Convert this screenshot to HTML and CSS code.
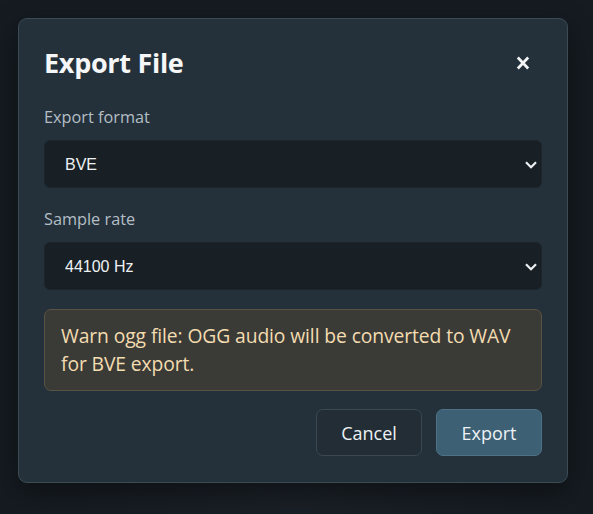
FILE: index.html
```html
<!DOCTYPE html>
<html lang="en">
<head>
<meta charset="utf-8">
<title>Export File</title>
<link rel="stylesheet" href="styles.css">
</head>
<body>
<div class="backdrop">
  <div class="modal" role="dialog" aria-labelledby="ttl">
    <div class="header">
      <h2 id="ttl" class="title">Export File</h2>
      <button class="close" aria-label="Close">
        <svg width="14" height="14" viewBox="0 0 14 14"><path d="M1.8 1.5 L12.2 12.5 M12.2 1.5 L1.8 12.5" stroke="#f2f4f5" stroke-width="2.7" stroke-linecap="butt"/></svg>
      </button>
    </div>
    <label class="label" for="fmt">Export format</label>
    <div class="select-wrap">
      <select id="fmt" class="select"><option>BVE</option></select>
      <svg class="chev" width="12" height="8" viewBox="0 0 12 8"><path d="M1 1.2 L6 6.2 L11 1.2" fill="none" stroke="#eef1f3" stroke-width="2.2"/></svg>
    </div>
    <label class="label second" for="rate">Sample rate</label>
    <div class="select-wrap">
      <select id="rate" class="select"><option>44100 Hz</option></select>
      <svg class="chev" width="12" height="8" viewBox="0 0 12 8"><path d="M1 1.2 L6 6.2 L11 1.2" fill="none" stroke="#eef1f3" stroke-width="2.2"/></svg>
    </div>
    <div class="warn">Warn ogg file: OGG audio will be converted to WAV for BVE export.</div>
    <div class="actions">
      <button class="btn btn-cancel">Cancel</button>
      <button class="btn btn-export">Export</button>
    </div>
  </div>
</div>
</body>
</html>
```
FILE: styles.css
```css
* { box-sizing: border-box; }
html, body { margin: 0; height: 100%; }
body {
  background: radial-gradient(ellipse at 50% 100%, #1a2027 0%, #151b21 70%);
  font-family: "Open Sans", "Noto Sans", sans-serif;
  color: #e9eef1;
  overflow: hidden;
}
.backdrop {
  padding: 18px 0 0 18px;
}
.modal {
  width: 550px;
  background: #24313b;
  border: 1px solid #3b4b56;
  border-radius: 9px;
  padding: 26px 25px 26px 25px;
  display: flex;
  flex-direction: column;
  box-shadow: 0 10px 30px rgba(0,0,0,0.4);
}
.header {
  display: flex;
  justify-content: space-between;
  align-items: flex-start;
  height: 36px;
  margin-bottom: 25px;
}
.title {
  margin: 0;
  font-size: 27px;
  line-height: 36px;
  font-weight: 700;
  color: #f4f6f7;
  letter-spacing: -0.3px;
}
.close {
  background: none;
  border: none;
  padding: 0;
  width: 30px;
  height: 30px;
  margin-top: 3px;
  margin-right: 4px;
  display: flex;
  align-items: center;
  justify-content: center;
  cursor: pointer;
}
.label {
  display: block;
  font-size: 16.3px;
  color: #b4bec5;
  line-height: 22px;
  margin-bottom: 12px;
}
.label.second { margin-top: 20px; }
.select-wrap {
  position: relative;
}
.select {
  appearance: none;
  -webkit-appearance: none;
  display: block;
  width: 100%;
  height: 48px;
  background: #182026;
  border: 1px solid #1c252c;
  border-radius: 6px;
  color: #eef1f3;
  font-family: "Liberation Sans", Arial, sans-serif;
  font-size: 16px;
  padding: 0 20px;
}
.chev {
  position: absolute;
  right: 5px;
  top: 21px;
  pointer-events: none;
}
.warn {
  margin-top: 19px;
  height: 82px;
  background: #3a3b36;
  border: 1px solid #5a5242;
  border-radius: 7px;
  padding: 12px 15px 12px 16px;
  color: #f4dcb1;
  font-size: 19.3px;
  line-height: 28px;
  letter-spacing: -0.1px;
}
.actions {
  margin-top: 18px;
  display: flex;
  justify-content: flex-end;
  gap: 14px;
}
.btn {
  width: 106px;
  height: 47px;
  border-radius: 7px;
  font-family: "Open Sans", "Noto Sans", sans-serif;
  font-size: 18px;
  color: #eef2f4;
  cursor: pointer;
}
.btn-cancel {
  background: #222d35;
  border: 1px solid #3a4852;
}
.btn-export {
  background: #3d6074;
  border: 1px solid #4d7285;
}
```
